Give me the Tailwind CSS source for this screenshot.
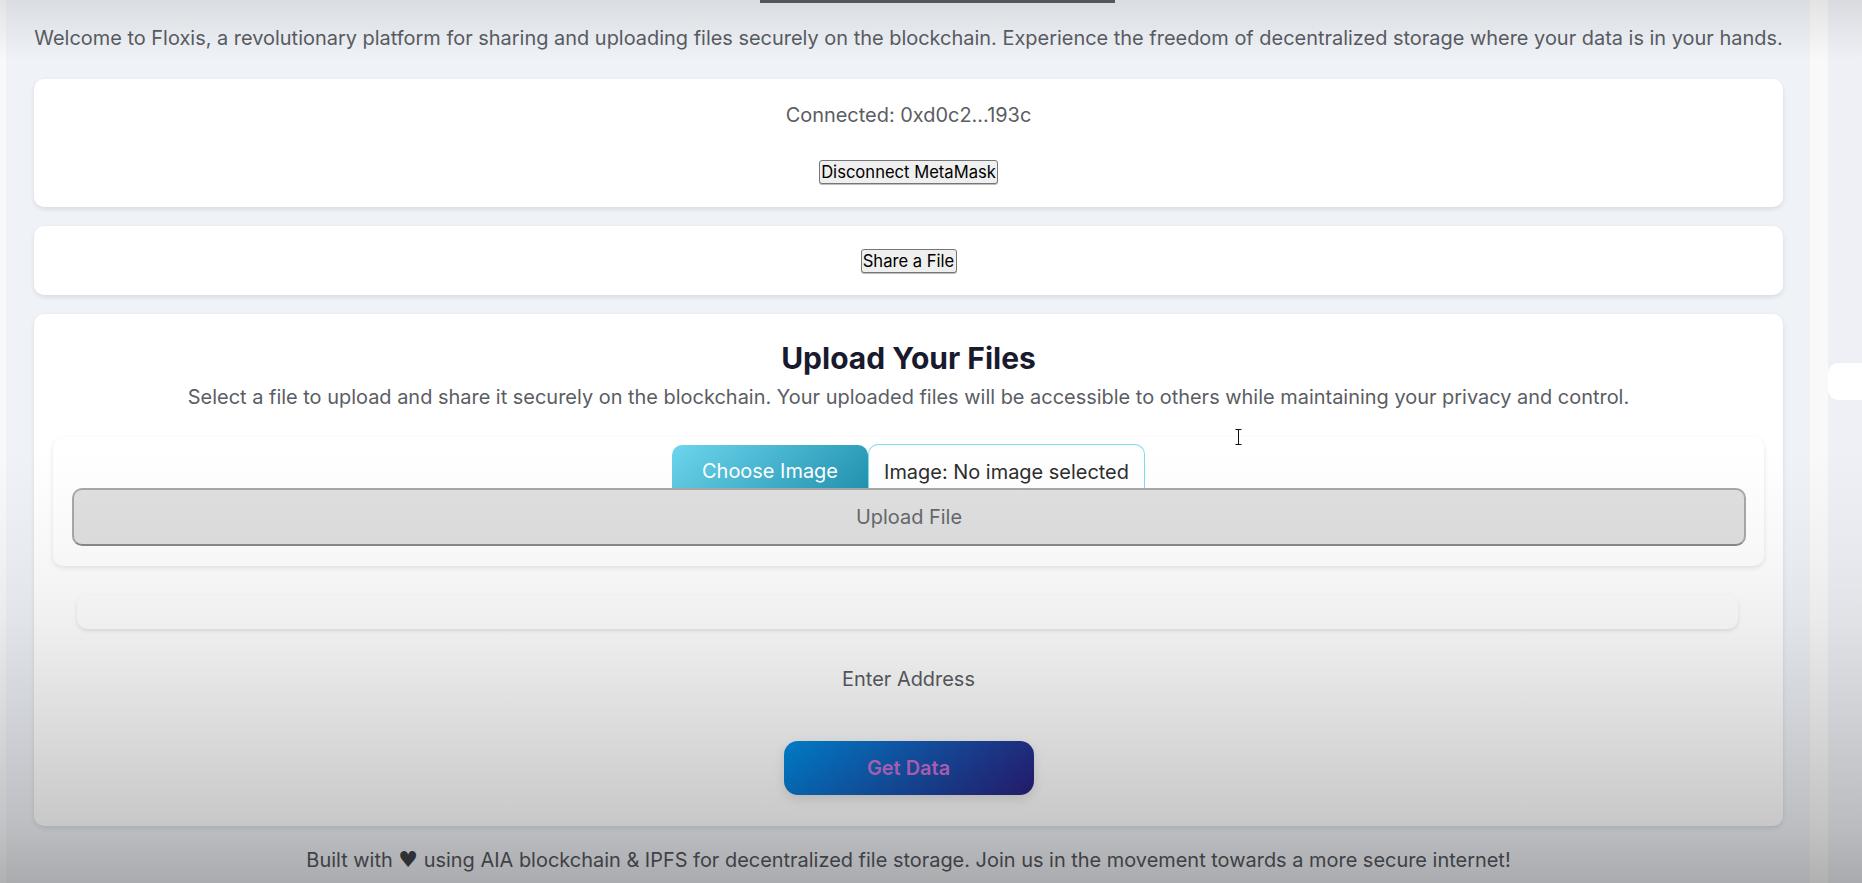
<!DOCTYPE html>
<html lang="en">
<head>
    <meta charset="UTF-8">
    <title>Floxis</title>
    <script src="https://cdn.jsdelivr.net/npm/@tailwindcss/browser@4"></script>
</head>
<body class="h-screen overflow-hidden relative flex bg-[#eff2f7] font-['Inter',sans-serif] text-[19.96px] text-[#5a5d63]">
    <div class="w-[6px] bg-[#f8f9fb]"></div>

    <!-- Main column -->
    <main class="w-[1804px] pl-[28px] pr-[27px] shrink-0 bg-[#eff2f7]">
        <div class="h-[3px] w-[355px] ml-[726px] bg-[#5a5f67]"></div>
        <p class="mt-[22px] h-[27px] leading-[27px] text-center whitespace-nowrap">Welcome to Floxis, a revolutionary platform for sharing and uploading files securely on the blockchain. Experience the freedom of decentralized storage where your data is in your hands.</p>

        <section class="mt-[27px] h-[128px] pt-[23px] flex flex-col items-center bg-white rounded-[10px] shadow-[0_2px_5px_rgba(0,0,0,0.1)]">
            <p class="h-[26px] leading-[26px]">Connected: 0xd0c2...193c</p>
            <button class="mt-[32px] h-[24px] w-[179px] pt-[1px] text-[16.6px] leading-none text-black bg-[#efefef] border border-[#767676] rounded-[3px] shadow-[0_1px_0_#bdbdbd] whitespace-nowrap">Disconnect MetaMask</button>
        </section>

        <section class="mt-[19px] h-[69px] pt-[23px] flex justify-center bg-white rounded-[10px] shadow-[0_2px_5px_rgba(0,0,0,0.1)]">
            <button class="h-[24px] w-[96px] text-[16.6px] leading-none text-black bg-[#efefef] border border-[#767676] rounded-[3px] shadow-[0_1px_0_#bdbdbd] whitespace-nowrap">Share a File</button>
        </section>

        <section class="mt-[19px] h-[512px] pt-[26px] flex flex-col items-center bg-white rounded-[10px] shadow-[0_2px_5px_rgba(0,0,0,0.1)]">
            <h2 class="h-[36px] leading-[36px] text-[30px] font-bold text-[#1a1a2e]">Upload Your Files</h2>
            <p class="mt-[8px] h-[27px] leading-[27px] whitespace-nowrap">Select a file to upload and share it securely on the blockchain. Your uploaded files will be accessible to others while maintaining your privacy and control.</p>

            <div class="mt-[26px] w-[1711px] h-[129px] pt-[7px] pl-[19px] pr-[20px] bg-white rounded-[10px] shadow-[0_2px_5px_rgba(0,0,0,0.1)]">
                <div class="flex justify-center h-[44px] pl-[1px]">
                    <div class="w-[196px] mt-[1px] pt-[11px] flex items-center justify-center text-white bg-[linear-gradient(135deg,#6dd5ed,#2193b0)] rounded-t-[10px]">Choose Image</div>
                    <div class="w-[277px] pt-[12px] flex items-center justify-center text-[#2d2d2d] bg-white border border-b-0 border-[#7fdcec] rounded-t-[10px] whitespace-nowrap">Image: No image selected</div>
                </div>
                <button class="block w-[1674px] h-[58px] pt-[2px] text-[19.96px] text-[#66686c] bg-[#e0e0e0] border-2 border-[#a8a8a8] border-b-[#8a8a8a] rounded-[10px]">Upload File</button>
            </div>

            <div class="mt-[29px] mr-[2px] w-[1661px] h-[34px] bg-white rounded-[10px] shadow-[0_2px_4px_rgba(0,0,0,0.1)]"></div>

            <p class="mt-[37px] h-[26px] leading-[26px]">Enter Address</p>

            <button class="mt-[49px] w-[250px] h-[54px] pt-[1px] text-[19.96px] font-semibold text-[#c970d2] bg-[linear-gradient(135deg,#0090e8,#2c2080)] rounded-[14px] shadow-[0_4px_12px_rgba(0,0,0,0.12)]">Get Data</button>
        </section>

        <p class="mt-[21px] h-[26px] leading-[26px] text-center whitespace-nowrap text-[#55575c]">Built with <span class="font-['DejaVu_Sans'] text-[22px] leading-none text-[#404145]">♥</span> using AIA blockchain &amp; IPFS for decentralized file storage. Join us in the movement towards a more secure internet!</p>
    </main>

    <div class="w-[18px] shrink-0 bg-[#f9f9fa]"></div>
    <div class="flex-1 pt-[363px] bg-[#eef0f5]">
        <div class="h-[37px] bg-white rounded-l-[10px]"></div>
    </div>

    <!-- Text cursor -->
    <svg class="absolute left-[1234px] top-[429px]" width="9" height="16" viewBox="0 0 9 16" fill="none" stroke="#111" stroke-width="1">
        <path d="M1.5 .5h6M4.5 .5v15M1.5 15.5h6"/>
    </svg>

    <!-- Screen fade, top and bottom -->
    <div class="absolute inset-0 pointer-events-none bg-[linear-gradient(to_bottom,rgba(0,0,0,0.09)_0px,rgba(0,0,0,0)_60px,rgba(0,0,0,0)_450px,rgba(0,0,0,0.03)_560px,rgba(0,0,0,0.06)_620px,rgba(0,0,0,0.135)_720px,rgba(0,0,0,0.215)_826px,rgba(0,0,0,0.29)_883px)]"></div>
</body>
</html>
